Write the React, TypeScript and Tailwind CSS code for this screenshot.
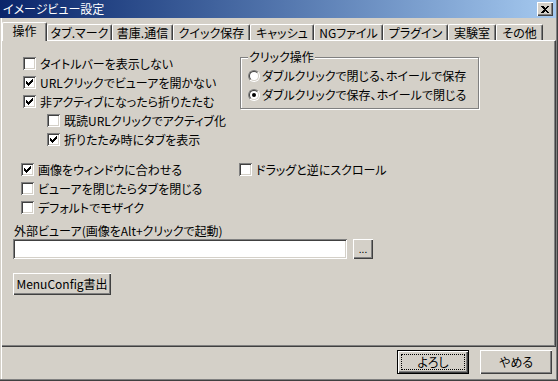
import React from "react";

const font = "font-['Noto_Sans_CJK_JP',sans-serif] [font-feature-settings:'palt'] text-[12px] leading-[14px] text-black";

const checkPixels = [
  [6, 0], [5, 1], [6, 1], [0, 2], [4, 2], [5, 2], [6, 2],
  [0, 3], [1, 3], [3, 3], [4, 3], [5, 3], [0, 4], [1, 4], [2, 4], [3, 4], [4, 4],
  [1, 5], [2, 5], [3, 5], [2, 6],
];
const checkPath = checkPixels.map(([x, y]) => `M${x} ${y}h1v1h-1z`).join("");

const Check = ({ checked }: { checked?: boolean }) => (
  <span className="relative w-[13px] h-[13px] shrink-0 bg-white shadow-[inset_1px_1px_#808080,inset_-1px_-1px_#fff,inset_2px_2px_#404040,inset_-2px_-2px_#d4d0c8]">
    {checked && (
      <svg className="absolute left-[3px] top-[3px]" width="7" height="7" viewBox="0 0 7 7" shapeRendering="crispEdges">
        <path d={checkPath} fill="#000" />
      </svg>
    )}
  </span>
);

const Radio = ({ checked }: { checked?: boolean }) => (
  <span className="flex w-[12px] h-[12px] shrink-0 rounded-full border border-t-[#808080] border-l-[#808080] border-b-white border-r-white">
    <span className="flex flex-1 items-center justify-center rounded-full border border-t-[#404040] border-l-[#404040] border-b-[#d4d0c8] border-r-[#d4d0c8] bg-white">
      {checked && <span className="w-[4px] h-[4px] rounded-full bg-black" />}
    </span>
  </span>
);

const CheckRow = ({ label, checked, className }: { label: string; checked?: boolean; className?: string }) => (
  <div className={`flex items-center gap-[4px] h-[19px] ${className ?? ""}`}>
    <Check checked={checked} />
    <span className="whitespace-nowrap">{label}</span>
  </div>
);

const bevel = "bg-[#d4d0c8] shadow-[inset_1px_1px_#fff,inset_-1px_-1px_#404040,inset_-2px_-2px_#808080]";

const tabs = [
  { label: "タブ.マーク", w: "w-[65px]" },
  { label: "書庫.通信", w: "w-[61px]" },
  { label: "クイック保存", w: "w-[77px]" },
  { label: "キャッシュ", w: "w-[64px]" },
  { label: "NGファイル", w: "w-[69px]" },
  { label: "プラグイン", w: "w-[65px]" },
  { label: "実験室", w: "w-[48px]" },
  { label: "その他", w: "w-[47px]" },
];

export default function App() {
  return (
    <div className={`w-[558px] h-[381px] bg-[#d4d0c8] border-r border-b border-[#404040] ${font}`}>
      <div className="flex flex-col h-[380px] border-r border-b border-[#808080]">
        {/* title bar */}
        <div className="flex items-center h-[18px] pl-[3px] pr-[3px] bg-linear-to-r from-[#0a246a] to-[#a6caf0]">
          <span className="flex-1 text-white">イメージビュー設定</span>
          <div className={`flex items-center justify-center w-[16px] h-[14px] ${bevel}`}>
            <svg width="8" height="7" viewBox="0 0 8 7" shapeRendering="crispEdges">
              <path d="M0 0h2l2 2 2-2h2L5 3.5 8 7H6L4 5 2 7H0l3-3.5z" fill="#000" />
            </svg>
          </div>
        </div>

        <div className="flex flex-col flex-1 ml-[1px] border-l border-white">
          {/* tabs */}
          <div className="flex items-end h-[22px]">
            <div className="relative z-10 -mb-px flex items-center justify-center w-[45px] h-[19px] pb-[2px] bg-[#d4d0c8] border-l border-t border-white border-r border-r-[#404040] rounded-t-[2px] shadow-[inset_-1px_0_#808080]">
              操作
            </div>
            {tabs.map((t) => (
              <div
                key={t.label}
                className={`flex items-center justify-center h-[16px] ${t.w} whitespace-nowrap border-l border-t border-white border-r border-r-[#404040] rounded-t-[2px] shadow-[inset_-1px_0_#808080]`}
              >
                {t.label}
              </div>
            ))}
          </div>

          {/* panel */}
          <div className="flex flex-col h-[307px] border-t border-white border-r border-b border-r-[#404040] border-b-[#404040] shadow-[inset_-1px_-1px_#808080]">
            <div className="flex">
              <div className="w-[238px] pl-[21px] pt-[13px]">
                <CheckRow label="タイトルバーを表示しない" />
                <CheckRow label="URLクリックでビューアを開かない" checked />
                <CheckRow label="非アクティブになったら折りたたむ" checked />
                <CheckRow label="既読URLクリックでアクティブ化" className="ml-[24px]" />
                <CheckRow label="折りたたみ時にタブを表示" checked className="ml-[24px]" />
              </div>
              <div className="relative mt-[16px] w-[239px] h-[52px] border border-[#808080] shadow-[inset_1px_1px_#fff,1px_1px_#fff] pl-[7px] pt-[8px]">
                <span className="absolute -top-[8px] left-[7px] px-[1px] bg-[#d4d0c8]">クリック操作</span>
                <div className="flex items-center gap-[2px] h-[19px]">
                  <Radio />
                  <span className="whitespace-nowrap">ダブルクリックで閉じる、ホイールで保存</span>
                </div>
                <div className="flex items-center gap-[2px] h-[19px]">
                  <Radio checked />
                  <span className="whitespace-nowrap">ダブルクリックで保存、ホイールで閉じる</span>
                </div>
              </div>
            </div>

            <div className="flex flex-col mt-[11px] pl-[11px]">
              <div className="flex ml-[8px]">
                <CheckRow label="画像をウィンドウに合わせる" checked className="w-[218px]" />
                <CheckRow label="ドラッグと逆にスクロール" />
              </div>
              <CheckRow label="ビューアを閉じたらタブを閉じる" className="ml-[8px]" />
              <CheckRow label="デフォルトでモザイク" className="ml-[8px]" />

              <div className="mt-[7px] ml-[1px] h-[13px] leading-[13px] whitespace-nowrap">外部ビューア(画像をAlt+クリックで起動)</div>
              <div className="flex items-center gap-[6px] mt-[2px]">
                <div className="w-[334px] h-[20px] bg-white shadow-[inset_1px_1px_#808080,inset_-1px_-1px_#fff,inset_2px_2px_#404040,inset_-2px_-2px_#d4d0c8]" />
                <div className={`flex items-center justify-center w-[20px] h-[20px] text-[10px] ${bevel}`}>...</div>
              </div>
              <div className={`flex items-center justify-center mt-[14px] w-[98px] h-[22px] ${bevel}`}>MenuConfig書出</div>
            </div>
          </div>

          {/* buttons */}
          <div className="flex justify-end gap-[11px] pt-[3px] pr-[4px]">
            <div className="flex w-[72px] h-[24px] border border-black">
              <div className={`relative flex flex-1 items-center justify-center ${bevel}`}>
                <span className="absolute inset-[3px] border border-dotted border-black" />
                よろし
              </div>
            </div>
            <div className={`flex items-center justify-center w-[72px] h-[24px] ${bevel}`}>やめる</div>
          </div>
        </div>
      </div>
    </div>
  );
}
